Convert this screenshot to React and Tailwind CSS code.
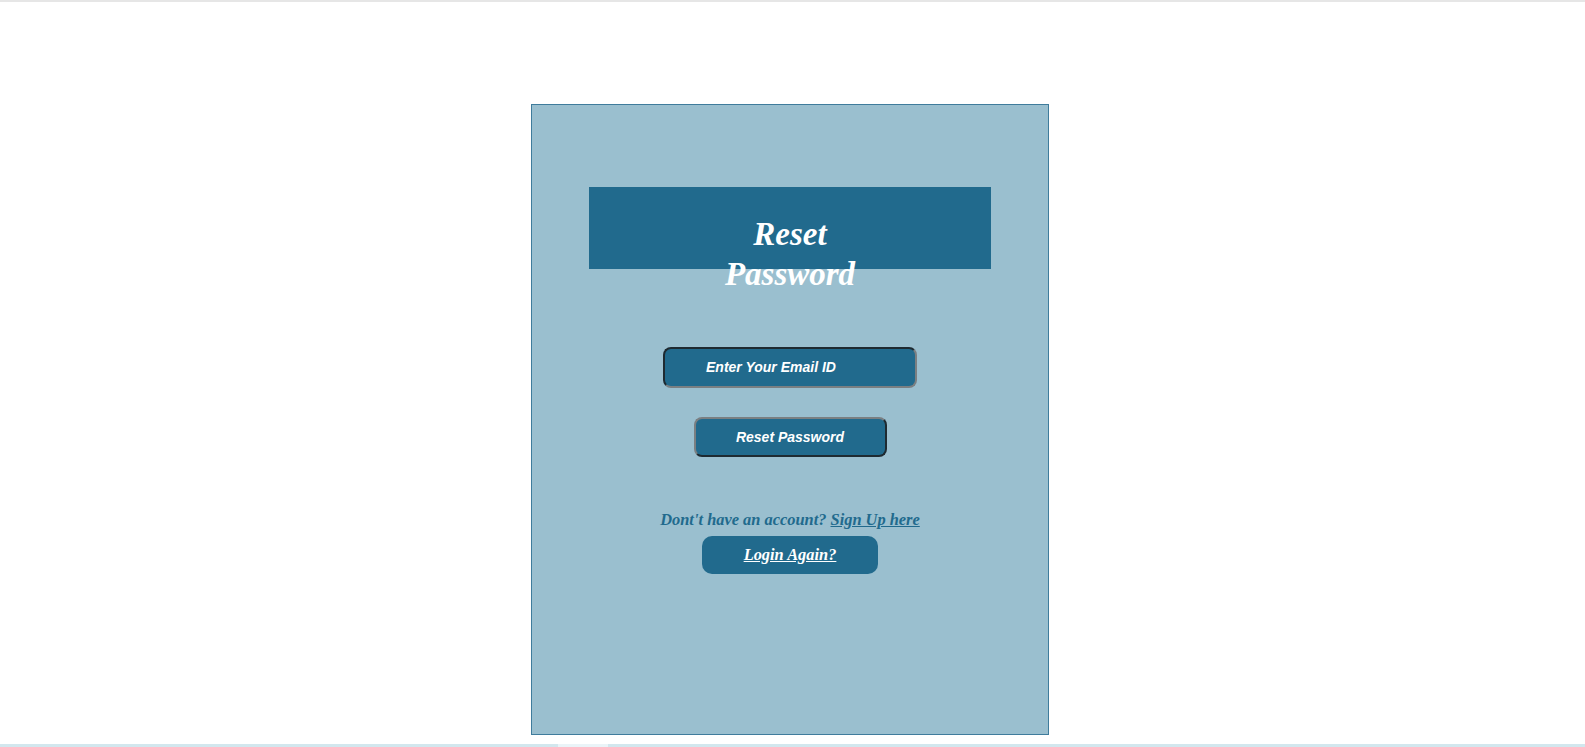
export default function App() {
  return (
    <div className="w-[1585px] h-[747px] bg-white flex flex-col overflow-hidden">
      <div className="h-[2px] bg-[#e6e6e6] shrink-0" />
      <div className="flex-1 flex justify-start pl-[531px] pt-[102px]">
        <div className="w-[518px] h-[631px] bg-[#9abfcf] border border-[#3f7c9c] flex flex-col items-center pt-[82px]">
          <div className="w-[402px] h-[82px] bg-[#216a8d] flex justify-center">
            <h1
              className="w-[160px] text-center text-white text-[33px] leading-[40px] font-bold italic pt-[27px]"
              style={{ fontFamily: '"Liberation Serif", "Times New Roman", serif' }}
            >
              Reset Password
            </h1>
          </div>
          <div
            className="mt-[78px] w-[254px] h-[41px] rounded-lg bg-[#216a8d] border-2 border-t-[#1e2a31] border-l-[#1e2a31] border-b-[#7a7f82] border-r-[#7a7f82] flex items-center pl-[41px] text-white text-[14px] font-bold italic"
            style={{ fontFamily: '"Liberation Sans", Arial, sans-serif' }}
          >
            Enter Your Email ID
          </div>
          <div
            className="mt-[29px] w-[193px] h-[40px] rounded-lg bg-[#216a8d] border-2 border-t-[#7a7f82] border-l-[#7a7f82] border-b-[#1e2a31] border-r-[#1e2a31] flex items-center justify-center text-white text-[14px] font-bold italic"
            style={{ fontFamily: '"Liberation Sans", Arial, sans-serif' }}
          >
            Reset Password
          </div>
          <p
            className="mt-[54px] text-[16.4px] leading-[18px] font-bold italic text-[#216a8d]"
            style={{ fontFamily: '"Liberation Serif", "Times New Roman", serif' }}
          >
            Dont't have an account? <span className="underline">Sign Up here</span>
          </p>
          <div
            className="mt-[7px] w-[176px] h-[38px] rounded-[10px] bg-[#216a8d] flex items-center justify-center text-white text-[16.4px] font-bold italic underline"
            style={{ fontFamily: '"Liberation Serif", "Times New Roman", serif' }}
          >
            Login Again?
          </div>
        </div>
      </div>
      <div className="h-[3px] shrink-0 bg-[#d2e7ee] flex">
        <div className="w-[558px]" />
        <div className="w-[50px] bg-[#eaf4f8]" />
      </div>
    </div>
  );
}
